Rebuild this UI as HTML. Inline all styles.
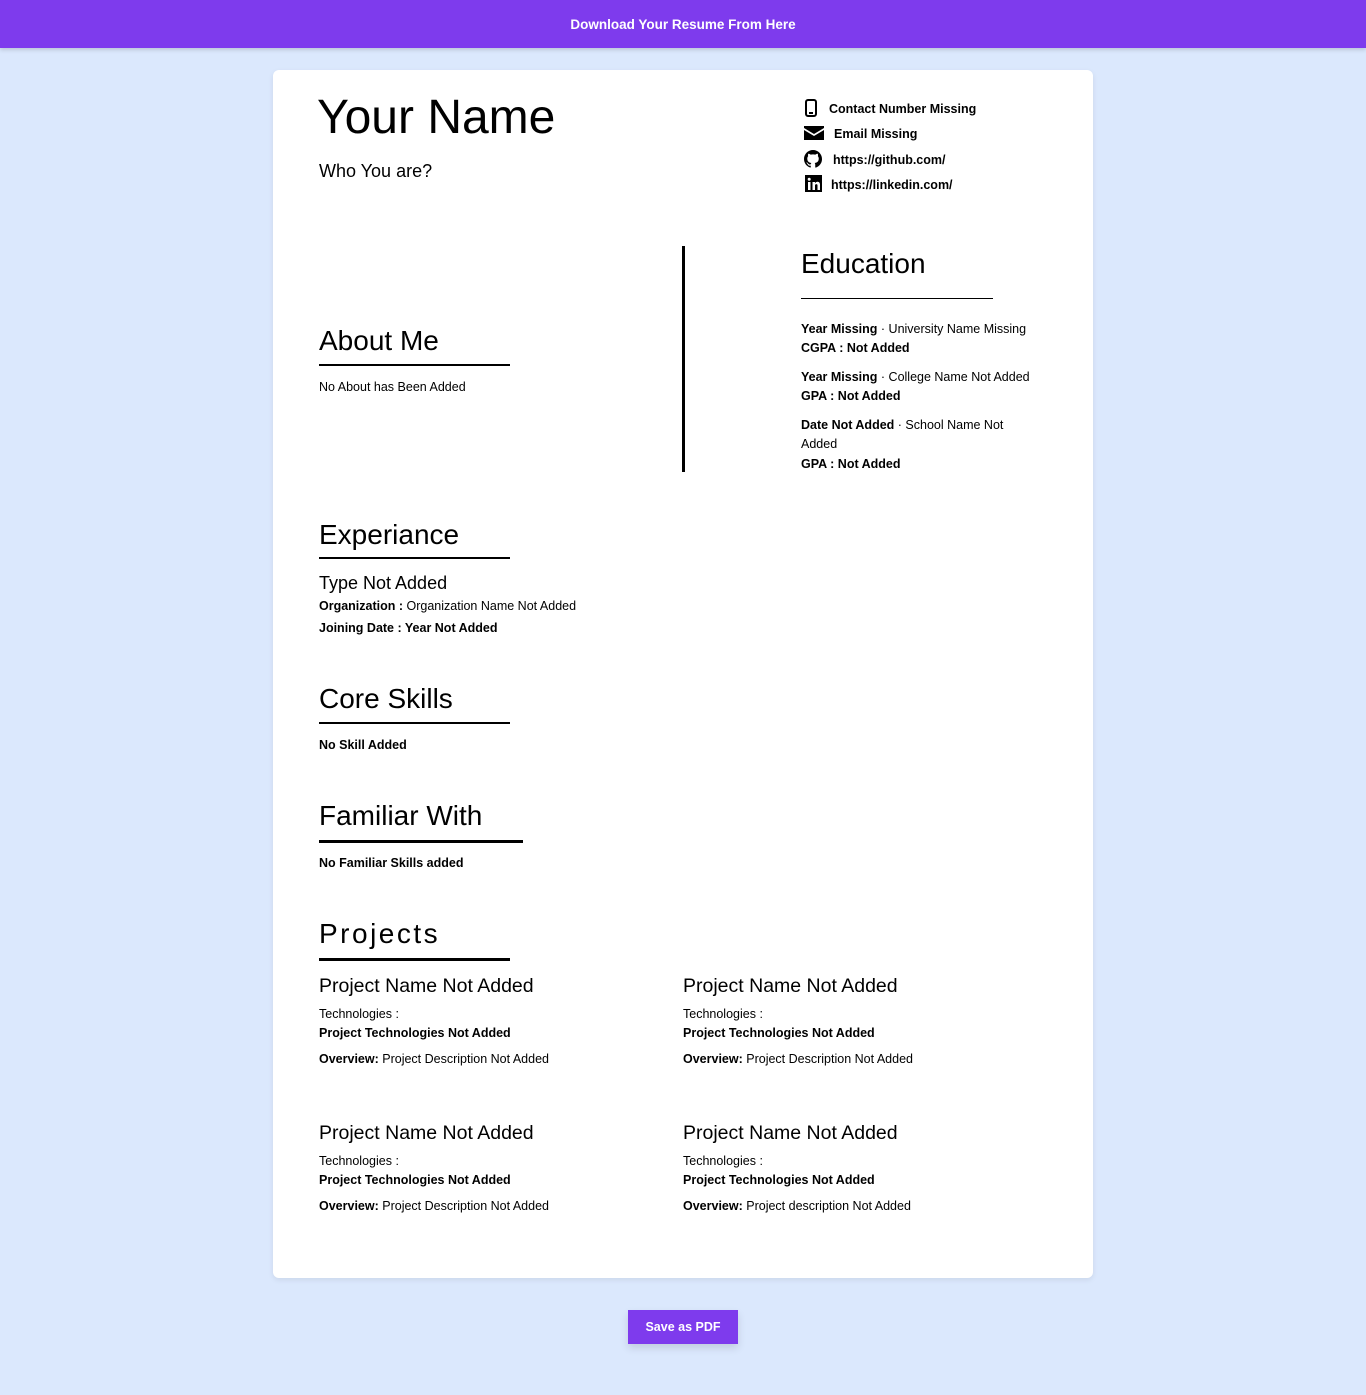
<!DOCTYPE html>
<html><head><meta charset="utf-8"><style>
*{margin:0;padding:0;box-sizing:border-box}
body{width:1366px;height:1395px;background:#dbe8fd;font-family:"Liberation Sans",sans-serif;color:#000;position:relative;overflow:hidden}
.bar{position:absolute;left:0;top:0;width:1366px;height:48px;background:#7e3bed;color:#fff;font-weight:bold;font-size:13.5px;text-align:center;line-height:50px;box-shadow:0 2px 4px rgba(0,0,0,.15)}
.card{position:absolute;left:273px;top:70px;width:820px;height:1208px;background:#fff;border-radius:6px;box-shadow:0 2px 6px rgba(0,0,0,.08)}
.t{position:absolute;white-space:nowrap;line-height:20px;font-size:12.5px}
.b{font-weight:bold}
.h{font-size:28px;line-height:36px}
.ln{position:absolute;background:#000}
.ic{position:absolute}
.btn{position:absolute;left:628px;top:1310px;width:110px;height:34px;background:#7e3bed;color:#fff;font-weight:bold;font-size:12.5px;text-align:center;line-height:34px;box-shadow:0 4px 8px rgba(0,0,0,.12)}
.pn{font-size:19.5px;line-height:24px}
</style></head><body>
<div class="bar">Download Your Resume From Here</div>
<div class="card"></div>

<div class="t" style="left:317px;top:88px;font-size:48px;line-height:60px">Your Name</div>
<div class="t" style="left:319px;top:160px;font-size:18px;line-height:22px">Who You are?</div>

<svg class="ic" style="left:805px;top:99px" width="12" height="18" viewBox="0 0 12 18"><rect x="1" y="1" width="10" height="16" rx="2" fill="none" stroke="#000" stroke-width="2"/><rect x="4" y="13" width="4" height="2" fill="#000"/></svg>
<div class="t b" style="left:829px;top:99px">Contact Number Missing</div>
<svg class="ic" style="left:804px;top:126px" width="20" height="14" viewBox="0 0 20 14"><path d="M0 0H20V2L10 8L0 2Z" fill="#000"/><path d="M0 4L10 10L20 4V14H0Z" fill="#000"/></svg>
<div class="t b" style="left:834px;top:124px">Email Missing</div>
<svg class="ic" style="left:804px;top:150px" width="18" height="18" viewBox="0 0 16 16"><path fill="#000" d="M8 0C3.58 0 0 3.58 0 8c0 3.54 2.290 6.53 5.47 7.59.4.07.55-.17.55-.38v-1.33c-2.23.48-2.7-1.07-2.7-1.070-.36-.92-.89-1.17-.89-1.17-.73-.5.05-.49.05-.49.8.06 1.23.82 1.23.82.72 1.22 1.87.87 2.33.66.07-.52.28-.87.51-1.07-1.78-.2-3.64-.89-3.64-3.95 0-.87.31-1.59.82-2.15-.08-.2-.36-1.02.08-2.12 0 0 .67-.21 2.2.82a7.6 7.6 0 014 0c1.53-1.04 2.2-.82 2.2-.82.44 1.1.16 1.92.08 2.12.51.56.82 1.27.82 2.15 0 3.07-1.87 3.75-3.65 3.95.29.25.54.73.54 1.48v2.2c0 .21.15.46.55.38A8 8 0 0016 8c0-4.42-3.58-8-8-8z"/></svg>
<div class="t b" style="left:833px;top:150px">https://github.com/</div>
<svg class="ic" style="left:805px;top:175px" width="17" height="17" viewBox="0 0 17 17"><rect width="17" height="17" fill="#000"/><rect x="3" y="7" width="2.5" height="8" fill="#fff"/><circle cx="4.2" cy="4.2" r="1.5" fill="#fff"/><path d="M7.5 7H10V8.3C10.5 7.3 11.5 6.8 12.5 6.8C14 6.8 15 7.8 15 9.8V15H12.5V10.5C12.5 9.6 12.1 9.1 11.3 9.1C10.5 9.1 10 9.7 10 10.5V15H7.5Z" fill="#fff"/></svg>
<div class="t b" style="left:831px;top:175px">https://linkedin.com/</div>

<div class="ln" style="left:682px;top:246px;width:3px;height:226px"></div>

<div class="t h" style="left:801px;top:246px">Education</div>
<div class="ln" style="left:801px;top:298px;width:192px;height:1px"></div>
<div class="t" style="left:801px;top:319px"><b>Year Missing</b> · University Name Missing</div>
<div class="t b" style="left:801px;top:338px">CGPA : Not Added</div>
<div class="t" style="left:801px;top:367px"><b>Year Missing</b> · College Name Not Added</div>
<div class="t b" style="left:801px;top:386px">GPA : Not Added</div>
<div class="t" style="left:801px;top:415px"><b>Date Not Added</b> · School Name Not</div>
<div class="t" style="left:801px;top:434px">Added</div>
<div class="t b" style="left:801px;top:454px">GPA : Not Added</div>

<div class="t h" style="left:319px;top:323px">About Me</div>
<div class="ln" style="left:319px;top:364px;width:191px;height:1.5px"></div>
<div class="t" style="left:319px;top:377px">No About has Been Added</div>

<div class="t h" style="left:319px;top:517px">Experiance</div>
<div class="ln" style="left:319px;top:557px;width:191px;height:2px"></div>
<div class="t" style="left:319px;top:571px;font-size:18px;line-height:24px">Type Not Added</div>
<div class="t" style="left:319px;top:596px"><b>Organization :</b> Organization Name Not Added</div>
<div class="t b" style="left:319px;top:618px">Joining Date : Year Not Added</div>

<div class="t h" style="left:319px;top:681px">Core Skills</div>
<div class="ln" style="left:319px;top:722px;width:191px;height:2px"></div>
<div class="t b" style="left:319px;top:735px">No Skill Added</div>

<div class="t h" style="left:319px;top:798px">Familiar With</div>
<div class="ln" style="left:319px;top:840px;width:204px;height:3px"></div>
<div class="t b" style="left:319px;top:853px">No Familiar Skills added</div>

<div class="t h" style="left:319px;top:916px;letter-spacing:2.5px">Projects</div>
<div class="ln" style="left:319px;top:958px;width:191px;height:3px"></div>

<div class="t pn" style="left:319px;top:974px">Project Name Not Added</div>
<div class="t" style="left:319px;top:1004px">Technologies :</div>
<div class="t b" style="left:319px;top:1023px">Project Technologies Not Added</div>
<div class="t" style="left:319px;top:1049px"><b>Overview:</b> Project Description Not Added</div>

<div class="t pn" style="left:683px;top:974px">Project Name Not Added</div>
<div class="t" style="left:683px;top:1004px">Technologies :</div>
<div class="t b" style="left:683px;top:1023px">Project Technologies Not Added</div>
<div class="t" style="left:683px;top:1049px"><b>Overview:</b> Project Description Not Added</div>

<div class="t pn" style="left:319px;top:1121px">Project Name Not Added</div>
<div class="t" style="left:319px;top:1151px">Technologies :</div>
<div class="t b" style="left:319px;top:1170px">Project Technologies Not Added</div>
<div class="t" style="left:319px;top:1196px"><b>Overview:</b> Project Description Not Added</div>

<div class="t pn" style="left:683px;top:1121px">Project Name Not Added</div>
<div class="t" style="left:683px;top:1151px">Technologies :</div>
<div class="t b" style="left:683px;top:1170px">Project Technologies Not Added</div>
<div class="t" style="left:683px;top:1196px"><b>Overview:</b> Project description Not Added</div>

<div class="btn">Save as PDF</div>
</body></html>
